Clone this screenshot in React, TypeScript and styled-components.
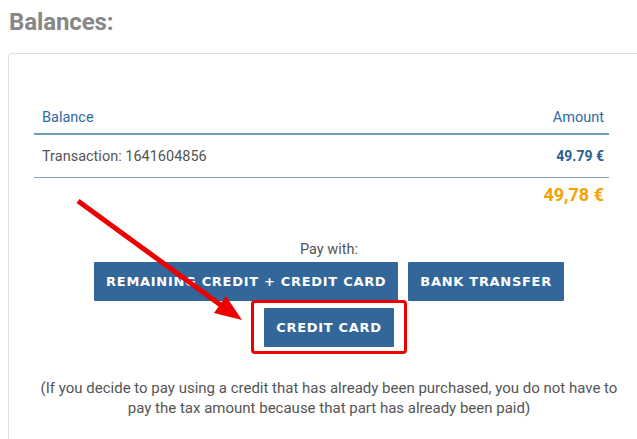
import React from 'react'
import styled, { createGlobalStyle } from 'styled-components'

const GlobalStyle = createGlobalStyle`
  html, body {
    margin: 0;
    padding: 0;
    background: #ffffff;
    overflow: hidden;
  }
  body {
    font-family: Roboto, 'Noto Sans', sans-serif;
  }
`

const Page = styled.div`
  position: relative;
  width: 637px;
  height: 439px;
  overflow: hidden;
`

const Title = styled.h1`
  margin: 0;
  padding: 8px 0 0 9px;
  height: 44px;
  box-sizing: border-box;
  font-family: Roboto, sans-serif;
  font-size: 24px;
  font-weight: 700;
  color: #878787;
  letter-spacing: -0.1px;
`

const Panel = styled.section`
  margin-left: 8px;
  margin-top: 9px;
  width: 660px;
  border: 1px solid #dedede;
  border-radius: 4px 0 0 0;
  padding: 48px 0 30px 0;
  box-sizing: border-box;
`

const Table = styled.div`
  width: 575px;
  margin-left: 25px;
`

const HeadRow = styled.div`
  display: flex;
  justify-content: space-between;
  padding: 0 5px 0 8px;
  height: 31px;
  align-items: center;
  border-bottom: 2px solid #6d9fc0;
  color: #2e6ba3;
  font-size: 14.5px;
`

const BodyRow = styled.div`
  display: flex;
  justify-content: space-between;
  align-items: center;
  height: 42px;
  padding: 0 5px 0 8px;
  border-bottom: 1px solid #7fa5c4;
  font-size: 14.5px;
  color: #555555;
`

const Amount = styled.span`
  font-weight: 700;
  color: #2d5f8f;
  font-size: 14px;
`

const Total = styled.div`
  text-align: right;
  padding: 6px 5px 0 0;
  color: #f5a100;
  font-weight: 700;
  font-size: 18px;
`

const PayBlock = styled.div`
  width: 640px;
  display: flex;
  flex-direction: column;
  align-items: center;
  margin-top: 36px;
`

const PayLabel = styled.div`
  font-size: 14.5px;
  color: #555555;
  margin-bottom: 4px;
`

const ButtonRow = styled.div`
  display: flex;
  gap: 10px;
`

const PayButton = styled.button`
  background: #336699;
  color: #ffffff;
  border: none;
  border-radius: 1px;
  height: 39px;
  padding: 0 12px;
  font-family: 'DejaVu Sans', sans-serif;
  font-weight: 700;
  font-size: 13px;
  letter-spacing: 0.7px;
  cursor: pointer;
`

const Highlight = styled.div`
  margin-top: -1px;
  border: 3px solid #ee0000;
  border-radius: 4px;
  padding: 5px 10px 4px 10px;
`

const Note = styled.p`
  width: 640px;
  margin: 24px 0 0 0;
  text-align: center;
  font-size: 15px;
  line-height: 20px;
  color: #555555;
`

const ArrowLayer = styled.svg`
  position: absolute;
  left: 0;
  top: 0;
  pointer-events: none;
`

const Arrow = () => (
  <ArrowLayer width="637" height="439" viewBox="0 0 637 439">
    <line x1="78" y1="201" x2="222" y2="306" stroke="#ee0000" strokeWidth="5" />
    <polygon points="242,320 214,313 226,296" fill="#ee0000" />
  </ArrowLayer>
)

const App: React.FC = () => {
  return (
    <Page>
      <GlobalStyle />
      <Title>Balances:</Title>
      <Panel>
        <Table>
          <HeadRow>
            <span>Balance</span>
            <span>Amount</span>
          </HeadRow>
          <BodyRow>
            <span>Transaction: 1641604856</span>
            <Amount>49.79 €</Amount>
          </BodyRow>
          <Total>49,78 €</Total>
        </Table>
        <PayBlock>
          <PayLabel>Pay with:</PayLabel>
          <ButtonRow>
            <PayButton>REMAINING CREDIT + CREDIT CARD</PayButton>
            <PayButton>BANK TRANSFER</PayButton>
          </ButtonRow>
          <Highlight>
            <PayButton>CREDIT CARD</PayButton>
          </Highlight>
        </PayBlock>
        <Note>
          (If you decide to pay using a credit that has already been purchased, you do not have to
          <br />
          pay the tax amount because that part has already been paid)
        </Note>
      </Panel>
      <Arrow />
    </Page>
  )
}

export default App
